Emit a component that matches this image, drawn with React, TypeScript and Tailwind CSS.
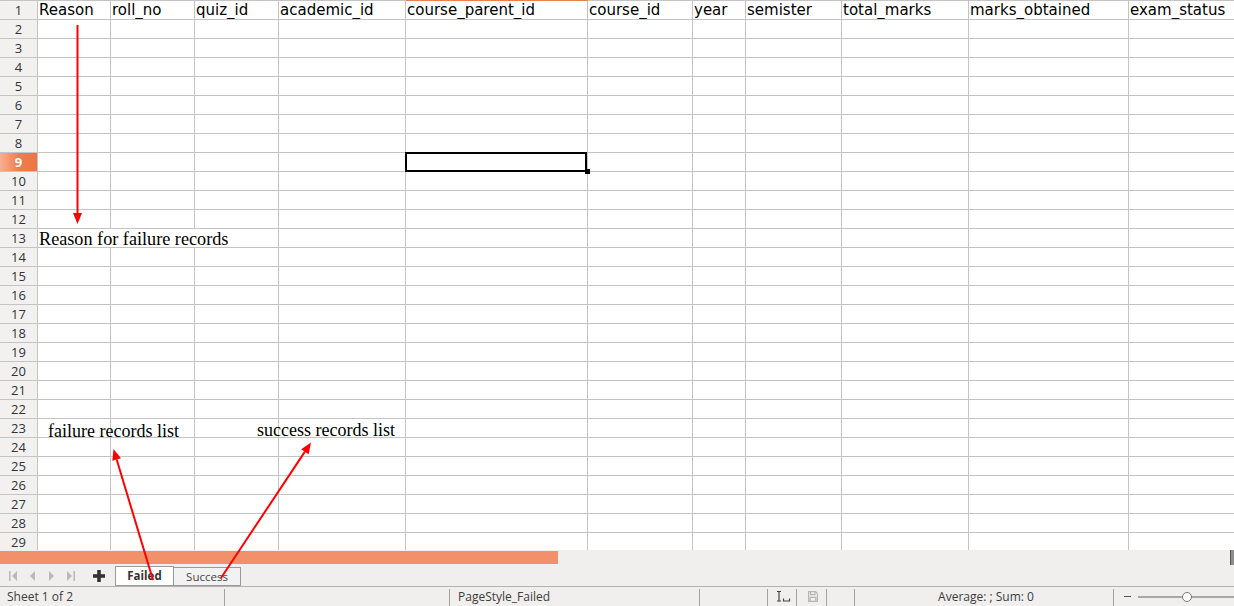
import React from 'react';

const cols = [
  { w: 'w-[73px]', name: 'Reason' },
  { w: 'w-[84px]', name: 'roll_no' },
  { w: 'w-[84px]', name: 'quiz_id' },
  { w: 'w-[127px]', name: 'academic_id' },
  { w: 'w-[182px]', name: 'course_parent_id' },
  { w: 'w-[105px]', name: 'course_id' },
  { w: 'w-[53px]', name: 'year' },
  { w: 'w-[96px]', name: 'semister' },
  { w: 'w-[127px]', name: 'total_marks' },
  { w: 'w-[160px]', name: 'marks_obtained' },
  { w: 'w-[140px]', name: 'exam_status' },
];

const rows = Array.from({ length: 29 }, (_, i) => i + 1);

const cellBase = 'h-[19px] shrink-0 border-r border-b border-[#c4c4c4] bg-white';

function RowHeader({ n }: { n: number }) {
  const active = n === 9;
  return (
    <div
      className={`h-[19px] w-[38px] shrink-0 border-r border-b border-[#c4c4c4] text-center font-['Open_Sans'] text-[13px] leading-[18px] ${
        active
          ? 'bg-gradient-to-r from-[#f7b092] via-[#f07d4d] to-[#ee7543] font-bold text-white'
          : 'bg-[#f2f1f0] text-[#333]'
      }`}
    >
      {n}
    </div>
  );
}

function SelectedCell() {
  return (
    <div className={`${cellBase} relative w-[182px]`}>
      <div className="absolute -left-px -top-px h-[20px] w-[182px] border-2 border-black" />
      <div className="absolute left-[179px] top-[16px] h-[5px] w-[5px] bg-black" />
    </div>
  );
}

function Row({ n }: { n: number }) {
  if (n === 13) {
    return (
      <div className="flex h-[19px]">
        <RowHeader n={n} />
        <div className={`${cellBase} w-[241px] whitespace-nowrap pl-px pt-px font-['Liberation_Serif'] text-[18.2px] leading-[18px] text-black`}>
          Reason for failure records
        </div>
        {cols.slice(3).map((c) => (
          <div key={c.name} className={`${cellBase} ${c.w}`} />
        ))}
      </div>
    );
  }
  return (
    <div className="flex h-[19px]">
      <RowHeader n={n} />
      {cols.map((c, i) =>
        n === 9 && i === 4 ? (
          <SelectedCell key={c.name} />
        ) : (
          <div
            key={c.name}
            className={`${cellBase} ${c.w} overflow-hidden whitespace-nowrap pl-px font-['DejaVu_Sans'] text-[15px] leading-[18px] text-black`}
          >
            {n === 1 ? c.name : ''}
          </div>
        )
      )}
    </div>
  );
}

function Arrow({ x1, y1, x2, y2 }: { x1: number; y1: number; x2: number; y2: number }) {
  const len = 11;
  const half = 4.5;
  const d = Math.hypot(x2 - x1, y2 - y1);
  const ux = (x2 - x1) / d;
  const uy = (y2 - y1) / d;
  const bx = x2 - ux * len;
  const by = y2 - uy * len;
  const pts = `${x2},${y2} ${bx - uy * half},${by + ux * half} ${bx + uy * half},${by - ux * half}`;
  return (
    <g>
      <line x1={x1} y1={y1} x2={bx} y2={by} stroke="#ff0000" strokeWidth={2} />
      <polygon points={pts} fill="#ff0000" />
    </g>
  );
}

function NavButton({ dir, end }: { dir: 'l' | 'r'; end?: boolean }) {
  return (
    <div className="flex w-[19px] items-center justify-center">
      <svg width="9" height="10" viewBox="0 0 9 10" fill="#b9b9b9">
        {dir === 'l' ? (
          <>
            {end && <rect x="0" y="0" width="1.5" height="10" />}
            <polygon points={end ? '8,0 8,10 3,5' : '7,0 7,10 2,5'} />
          </>
        ) : (
          <>
            <polygon points={end ? '1,0 1,10 6,5' : '2,0 2,10 7,5'} />
            {end && <rect x="7.5" y="0" width="1.5" height="10" />}
          </>
        )}
      </svg>
    </div>
  );
}

function Sep() {
  return <div className="mt-[2px] w-px shrink-0 self-stretch bg-[#a3a3a3]" />;
}

export default function App() {
  return (
    <div className="relative h-[606px] w-[1234px] overflow-hidden bg-white">
      <div className="h-[550px] overflow-hidden">
        <div className="flex h-px">
          <div className="w-[406px] bg-[#c4c4c4]" />
          <div className="w-[182px] bg-[#e9814f]" />
          <div className="flex-1 bg-[#c4c4c4]" />
        </div>
        {rows.map((n) => (
          <Row key={n} n={n} />
        ))}
      </div>

      <div className="flex h-[15px] bg-[#f0efed]">
        <div className="mt-px h-[13px] w-[558px] bg-[#f2906a]" />
        <div className="flex-1" />
        <div className="w-[4px] border-l border-[#555] bg-[#8e8e8e]" />
      </div>

      <div className="flex h-[21px] bg-[#f0efed] pl-[4px]">
        <NavButton dir="l" end />
        <NavButton dir="l" />
        <NavButton dir="r" />
        <NavButton dir="r" end />
        <div className="ml-[9px] flex w-[20px] items-center justify-center">
          <svg width="12" height="12" viewBox="0 0 12 12" fill="#333">
            <rect x="4.2" y="0" width="3.6" height="12" />
            <rect x="0" y="4.2" width="12" height="3.6" />
          </svg>
        </div>
        <div className="ml-[6px] mt-px flex h-[20px] w-[59px] items-center justify-center border border-[#9a9a9a] bg-white font-['Open_Sans'] text-[11.5px] font-bold text-[#333]">
          Failed
        </div>
        <div className="-ml-px mt-[2px] flex h-[19px] w-[68px] items-center justify-center border border-[#9a9a9a] bg-[#f2f2f2] font-['Open_Sans'] text-[11.5px] text-[#444]">
          Success
        </div>
      </div>

      <div className="flex h-[20px] border-t border-[#b3b3b3] bg-[#f0efed] font-['Open_Sans'] text-[12px] text-[#3c3c3c]">
        <div className="flex w-[224px] items-center pl-[7px]">Sheet 1 of 2</div>
        <Sep />
        <div className="w-[224px]" />
        <Sep />
        <div className="flex w-[249px] items-center pl-[8px]">PageStyle_Failed</div>
        <Sep />
        <div className="w-[67px]" />
        <Sep />
        <div className="flex w-[28px] items-center pl-[8px]">
          <svg width="15" height="11" viewBox="0 0 15 11" fill="none" stroke="#444" strokeWidth="1.2">
            <path d="M1 0.5h4M3 0.5v9.5M1 10h4" />
            <path d="M7.5 7.5v2.5h6v-2.5" />
          </svg>
        </div>
        <Sep />
        <div className="flex w-[29px] items-center pl-[11px]">
          <svg width="10" height="11" viewBox="0 0 10 11" fill="none" stroke="#b5b5b5" strokeWidth="1.2">
            <path d="M0.6 0.6h7l1.8 1.8v8h-8.8z" />
            <path d="M2.5 0.6v3h4.5v-3" />
            <path d="M2.2 10.4v-4h5.6v4" />
          </svg>
        </div>
        <Sep />
        <div className="w-[27px]" />
        <Sep />
        <div className="flex w-[258px] items-center justify-center pl-[4px]">Average: ; Sum: 0</div>
        <Sep />
        <div className="flex flex-1 items-center pl-[10px]">
          <div className="h-px w-[7px] bg-[#555]" />
          <div className="relative ml-[7px] h-[2px] flex-1 bg-[#a8a8a8]">
            <div className="absolute left-[44px] top-[-4px] h-[10px] w-[10px] rounded-full border-[1.5px] border-[#777] bg-white" />
          </div>
        </div>
      </div>

      <div className="absolute left-[48px] top-[422px] whitespace-nowrap font-['Liberation_Serif'] text-[18px] leading-[18px] text-black">
        failure records list
      </div>
      <div className="absolute left-[257px] top-[421px] whitespace-nowrap font-['Liberation_Serif'] text-[18px] leading-[18px] text-black">
        success records list
      </div>

      <svg className="pointer-events-none absolute left-0 top-0" width="1234" height="606">
        <Arrow x1={77.5} y1={25} x2={77.5} y2={224} />
        <Arrow x1={153} y1={580} x2={113.5} y2={449} />
        <Arrow x1={221} y1={578} x2={311} y2={442.5} />
      </svg>
    </div>
  );
}
